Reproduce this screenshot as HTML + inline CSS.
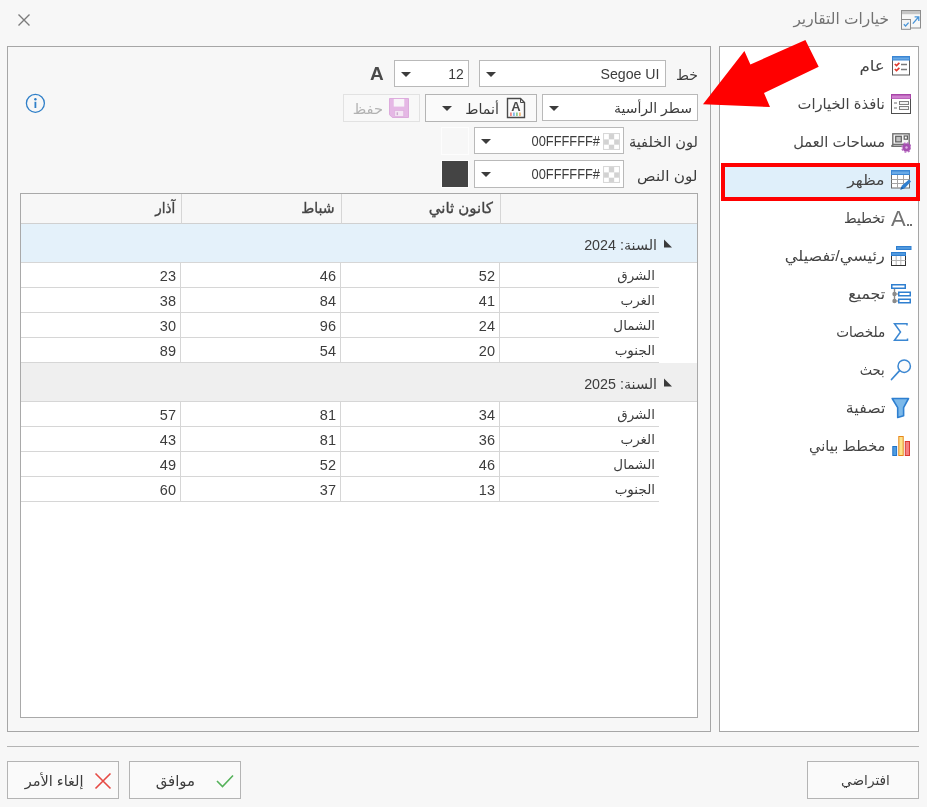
<!DOCTYPE html>
<html lang="ar">
<head>
<meta charset="utf-8">
<title>خيارات التقارير</title>
<style>
*{box-sizing:border-box;margin:0;padding:0}
html,body{width:927px;height:807px;overflow:hidden;background:#f7f7f7}
body{position:relative;will-change:transform;font-family:"Liberation Sans","DejaVu Sans",sans-serif;font-size:13px;color:#3c3c3c}
.abs{position:absolute}
.t{position:absolute;white-space:nowrap;direction:rtl;text-align:right;line-height:20px}
.panel{position:absolute;border:1px solid #a6a6a6;background:#f7f7f7}
.nav{position:absolute;right:42px;white-space:nowrap;direction:rtl;transform-origin:right center;font-size:15px;line-height:20px;color:#444}
.ico{position:absolute}
.combo{position:absolute;height:27px;border:1px solid #b9b9b9;background:#fff}
.combo .v{position:absolute;top:3px;white-space:nowrap;line-height:20px;font-size:15px;color:#3c3c3c;transform-origin:right center}
.arr{position:absolute;width:0;height:0;margin-left:-0.500px;border-left:5px solid transparent;border-right:5px solid transparent;border-top:5.400px solid #3c3c3c}
.btn{position:absolute;border:1px solid #b4b4b4;background:#fafafa}
.grid{position:absolute;left:20px;top:193px;width:678px;height:525px;border:1px solid #a9a9a9;background:#fff}
.row{position:absolute;left:0;width:676px}
.cell{position:absolute;top:0;height:100%;border-left:1px solid #d6d6d6;border-bottom:1px solid #d6d6d6}
.cell span{position:absolute;right:5px;top:3px;line-height:20px;white-space:nowrap;font-size:13.5px;color:#3c3c3c}
.cell span.n{font-size:14.500px;right:4px}
.hdr .cell{border-color:#d0d0d0;background:#f7f7f7}
.hdr .cell span{top:4px;right:6px;font-size:15px;-webkit-text-stroke:0.35px #444;color:#444;transform-origin:right center}
</style>
</head>
<body>

<!-- title bar -->
<div class="t" style="right:38px;top:9px;font-size:15.400px;color:#727272">خيارات التقارير</div>
<svg class="ico" style="left:901px;top:10px" width="20" height="20" viewBox="0 0 20 20">
  <rect x="0.500" y="0.500" width="19" height="17.500" fill="#f7f7f7" stroke="#8c8c8c"/>
  <rect x="1" y="1" width="18" height="3.200" fill="#c6c6c6"/>
  <path d="M11.800 13.600 L17.600 7 M13.600 6.800 H17.800 V11" stroke="#4a95d8" stroke-width="1.300" fill="none"/>
  <rect x="0.500" y="9.500" width="9" height="9.800" fill="#f4f4f4" stroke="#8c8c8c"/>
  <path d="M2.800 14.300 L4.600 16 L7.600 12.600" stroke="#4a95d8" stroke-width="1.300" fill="none"/>
</svg>
<svg class="ico" style="left:17px;top:13px" width="14" height="14" viewBox="0 0 14 14"><path d="M1.500 1.500 L12.500 12.500 M12.500 1.500 L1.500 12.500" stroke="#7b7b7b" stroke-width="1.400" fill="none"/></svg>

<!-- panels -->
<div class="panel" style="left:7px;top:46px;width:704px;height:686px"></div>
<div class="panel" style="left:719px;top:46px;width:200px;height:686px;background:#fff"></div>
<div class="abs" style="left:7px;top:746px;width:912px;height:1px;background:#b4b4b4"></div>


<!-- red arrow -->
<svg class="ico" style="left:690px;top:30px;z-index:5" width="140" height="90" viewBox="690 30 140 90"><polygon points="703,104.300 744.400,51 750.400,64.500 805.400,40 818.700,66.800 764,93 770,107" fill="#ff0000"/></svg>

<!-- nav selection -->
<div class="abs" style="left:721px;top:163px;width:199px;height:38px;border:4px solid #ff0000;background:#dfeffa;z-index:4"></div>

<!-- nav labels -->
<div class="nav" style="top:56px;z-index:6;transform:scaleX(1.115)">عام</div>
<div class="nav" style="top:94px;z-index:6;transform:scaleX(0.983)">نافذة الخيارات</div>
<div class="nav" style="top:132px;z-index:6;transform:scaleX(0.976)">مساحات العمل</div>
<div class="nav" style="top:170px;z-index:6;transform:scaleX(1.052)">مظهر</div>
<div class="nav" style="top:208px;z-index:6;transform:scaleX(0.913)">تخطيط</div>
<div class="nav" style="top:246px;z-index:6;transform:scaleX(1.077)">رئيسي/تفصيلي</div>
<div class="nav" style="top:284px;z-index:6;transform:scaleX(1.049)">تجميع</div>
<div class="nav" style="top:322px;z-index:6;transform:scaleX(0.905)">ملخصات</div>
<div class="nav" style="top:360px;z-index:6;transform:scaleX(0.873)">بحث</div>
<div class="nav" style="top:398px;z-index:6;transform:scaleX(1.057)">تصفية</div>
<div class="nav" style="top:436px;z-index:6;transform:scaleX(0.973)">مخطط بياني</div>

<!-- nav icons -->
<svg class="ico" style="left:891px;top:56px;z-index:6" width="20" height="20" viewBox="0 0 20 20"><rect x="1.500" y="0.500" width="17" height="18.500" fill="#fff" stroke="#5a5a5a"/><rect x="1" y="0" width="18" height="4.500" fill="#3a86d4"/><rect x="2" y="1.500" width="16" height="2" fill="#6aaae6"/><path d="M3.800 8 L5.500 9.600 L8.400 6.800 M3.800 13 L5.500 14.600 L8.400 11.800" fill="none" stroke="#e03a2e" stroke-width="1.700"/><path d="M10 8.500 H16 M10 13.500 H16" stroke="#7a7a7a" stroke-width="1.300"/></svg>
<svg class="ico" style="left:891px;top:94px;z-index:6" width="20" height="20" viewBox="0 0 20 20"><rect x="0.500" y="0.500" width="19" height="19" fill="#fff" stroke="#4f4f4f"/><rect x="0" y="0" width="20" height="5" fill="#a846a8"/><rect x="1" y="1.500" width="18" height="3" fill="#cf82cf"/><path d="M3 9 H6 M3 14 H6" stroke="#707070" stroke-width="1.200"/><rect x="8.500" y="7.500" width="9" height="3" fill="#f2f2f2" stroke="#808080"/><rect x="8.500" y="12.500" width="9" height="3" fill="#f2f2f2" stroke="#808080"/></svg>
<svg class="ico" style="left:891px;top:132px;z-index:6" width="20" height="21" viewBox="0 0 20 21"><rect x="1.800" y="1.800" width="16.400" height="10.600" fill="#f4f4f4" stroke="#707070" stroke-width="1.400"/><rect x="4.700" y="4.300" width="5.600" height="5.600" fill="#c2c2c2" stroke="#5e5e5e" stroke-width="1.200"/><rect x="13.200" y="4" width="3.200" height="3.200" fill="#fff" stroke="#5e5e5e" stroke-width="1.200"/><path d="M0.600 14.200 L2.200 12.200 M0.300 14.300 H11.500" stroke="#707070" stroke-width="1.600" fill="none"/><circle cx="15.500" cy="15.500" r="4" fill="#a54fb0"/><circle cx="15.500" cy="15.500" r="4.600" fill="none" stroke="#b86cc2" stroke-width="1.400" stroke-dasharray="2 1.600"/><circle cx="15.500" cy="15.500" r="1.200" fill="#dcb3e2"/></svg>
<svg class="ico" style="left:891px;top:170px;z-index:6" width="21" height="21" viewBox="0 0 21 21"><rect x="0.500" y="0.500" width="18" height="17.500" fill="#fff" stroke="#6a6a6a"/><rect x="0" y="0" width="19" height="5" fill="#3a86d4"/><rect x="1" y="1.500" width="17" height="2.500" fill="#6aaae6"/><path d="M0.500 9.500 H18.500 M0.500 13.500 H18.500 M6.500 5 V18 M12.500 5 V18" stroke="#a5a5a5" fill="none"/><path d="M9.500 19.500 L11 15.500 L18 9.500 L20 11.500 L13.500 18.500 Z" fill="#2f7fd0"/><path d="M9.300 19.800 L10.600 16.500 L12.600 18.600 Z" fill="#1b5fa8"/></svg>
<div class="abs" style="left:891px;top:204px;width:24px;height:30px;font-size:22px;line-height:30px;color:#727272;z-index:6;font-weight:normal">A</div>
<div class="abs" style="left:907px;top:224px;width:2px;height:2px;background:#6e6e6e;z-index:6"></div>
<div class="abs" style="left:910px;top:224px;width:2px;height:2px;background:#6e6e6e;z-index:6"></div>
<svg class="ico" style="left:891px;top:246px;z-index:6" width="21" height="20" viewBox="0 0 21 20"><rect x="5" y="0" width="15.500" height="4" fill="#2f7fd0"/><rect x="6" y="1.200" width="13.500" height="1.600" fill="#5aa0e2"/><rect x="0.500" y="6.500" width="14" height="13" fill="#fff" stroke="#333"/><rect x="0" y="6" width="15" height="4" fill="#2f7fd0"/><rect x="1" y="7.200" width="13" height="1.600" fill="#5aa0e2"/><path d="M0.500 14.500 H14.500 M5.200 10 V19 M9.800 10 V19" stroke="#b5b5b5" fill="none"/></svg>
<svg class="ico" style="left:891px;top:284px;z-index:6" width="21" height="21" viewBox="0 0 21 21"><path d="M3.500 4 V17" stroke="#8a8a8a" stroke-width="1.400"/><circle cx="3.500" cy="10" r="2.200" fill="#8a8a8a"/><circle cx="3.500" cy="17" r="2.200" fill="#8a8a8a"/><path d="M3.500 10 H8 M3.500 17 H8" stroke="#8a8a8a" stroke-width="1.200"/><rect x="0.750" y="0.750" width="13.500" height="3.500" fill="#fff" stroke="#2f7fd0" stroke-width="1.500"/><rect x="7.750" y="8.250" width="11.500" height="3.500" fill="#fff" stroke="#2f7fd0" stroke-width="1.500"/><rect x="7.750" y="15.250" width="11.500" height="3.500" fill="#fff" stroke="#2f7fd0" stroke-width="1.500"/></svg>
<svg class="ico" style="left:892px;top:322px;z-index:6" width="18" height="20" viewBox="0 0 18 20"><path d="M15 3.500 V1.800 H2.500 L8.500 10 L2.500 18.200 H15.500 V16.500" fill="none" stroke="#3b87d2" stroke-width="1.500" stroke-linejoin="miter"/></svg>
<svg class="ico" style="left:890px;top:358px;z-index:6" width="22" height="24" viewBox="0 0 22 24"><circle cx="14.200" cy="8.200" r="6.200" fill="#fbfbfb" stroke="#3b87d2" stroke-width="1.500"/><path d="M9.600 12.600 L1.500 21.500" stroke="#3b87d2" stroke-width="1.700" stroke-linecap="round"/></svg>
<svg class="ico" style="left:891px;top:397px;z-index:6" width="19" height="22" viewBox="0 0 19 22"><path d="M1.200 1.500 H17.500 L12.600 10.600 V18.800 L6.700 20.500 V10.600 Z" fill="#7cb9ea" stroke="#2e7fd0" stroke-width="1.600" stroke-linejoin="round"/></svg>
<svg class="ico" style="left:891px;top:435px;z-index:6" width="20" height="22" viewBox="0 0 20 22"><rect x="1.800" y="11.500" width="3.800" height="9" fill="#4f9be0" stroke="#2073c8"/><rect x="7.800" y="1.500" width="4.400" height="19" fill="#fbe38c" stroke="#e8861a"/><rect x="14.300" y="6.500" width="4.200" height="14" fill="#f57f7f" stroke="#d93a32"/></svg>


<!-- form controls -->
<div class="t" style="right:229px;top:65px;font-size:14px">خط</div>
<div class="combo" style="left:479px;top:60px;width:187px"><span class="v" style="right:5px;transform:scaleX(0.945)">Segoe UI</span><i class="arr" style="left:6px;top:11px"></i></div>
<div class="combo" style="left:394px;top:60px;width:75px"><span class="v" style="right:4px;transform:scaleX(0.93)">12</span><i class="arr" style="left:6px;top:11px"></i></div>
<div class="abs" style="left:370px;top:62px;font-size:19px;font-weight:bold;line-height:24px;color:#4a4a4a">A</div>

<div class="combo" style="left:542px;top:94px;width:156px"><span class="v" style="right:5px;direction:rtl;font-size:14px">سطر الرأسية</span><i class="arr" style="left:6px;top:11px"></i></div>
<div class="btn" style="left:425px;top:94px;width:112px;height:28px"><span class="t" style="right:37px;top:4px;font-size:14.300px">أنماط</span><i class="arr" style="left:16px;top:11px"></i></div>
<div class="btn" style="left:343px;top:94px;width:77px;height:28px;border-color:#e2e2e2;background:#f8f8f8"><span class="t" style="right:36px;top:4px;font-size:14.600px;color:#b2b2b2">حفظ</span></div>

<svg class="ico" style="left:506px;top:97px;z-index:3" width="20" height="22" viewBox="0 0 20 22"><path d="M1.500 1.500 H14.500 L18.500 5.500 V20.500 H1.500 Z" fill="#fafafa" stroke="#4a4a4a" stroke-width="1.400"/><path d="M14.500 1.500 V5.500 H18.500" fill="none" stroke="#4a4a4a"/><text x="10" y="14" font-size="13" font-weight="bold" text-anchor="middle" fill="#4a4a4a" font-family="Liberation Sans, sans-serif">A</text><rect x="4" y="15.500" width="1.800" height="3.500" fill="#ee8883"/><rect x="7" y="15.500" width="1.800" height="3.500" fill="#85b8ea"/><rect x="10" y="15.500" width="1.800" height="3.500" fill="#90cf94"/><rect x="13" y="15.500" width="1.800" height="3.500" fill="#f4b878"/></svg>
<svg class="ico" style="left:389px;top:98px;z-index:3" width="20" height="20" viewBox="0 0 21 21"><path d="M0.500 0.500 H20.500 V20.500 H3.500 L0.500 17.500 Z" fill="#e5b8e5" stroke="#dba8db"/><rect x="5" y="1" width="11" height="8" fill="#f8f4f8"/><rect x="6" y="13" width="9.500" height="6.500" fill="#f4e6f4" stroke="#ddb0dd" stroke-width="0.800"/><rect x="8" y="15" width="1.500" height="3" fill="#ccaacc"/></svg>


<div class="t" style="right:229px;top:132px;font-size:14.600px">لون الخلفية</div>
<div class="combo" style="left:474px;top:127px;width:150px"><span class="v" style="right:23px;direction:ltr;transform:scaleX(0.855)">00FFFFFF#</span><i class="arr" style="left:6px;top:11px"></i><svg class="ico" style="right:3px;top:5px" width="17" height="17" viewBox="0 0 16 16"><rect x="0.500" y="0.500" width="15" height="15" fill="#fff" stroke="#d8d8d8"/><rect x="5.500" y="1" width="5" height="5" fill="#d2d2d2"/><rect x="1" y="6" width="4.500" height="5" fill="#d2d2d2"/><rect x="10.500" y="6" width="4.500" height="5" fill="#d2d2d2"/><rect x="5.500" y="11" width="5" height="4" fill="#d2d2d2"/></svg></div>
<div class="abs" style="left:441px;top:127px;width:28px;height:28px;border:1px solid #fdfdfd;background:#f7f7f7"></div>

<div class="t" style="right:229px;top:165.500px;font-size:14.600px;transform:scaleX(1.05);transform-origin:right center">لون النص</div>
<div class="combo" style="left:474px;top:160px;width:150px;height:28px"><span class="v" style="right:23px;direction:ltr;transform:scaleX(0.855)">00FFFFFF#</span><i class="arr" style="left:6px;top:11px"></i><svg class="ico" style="right:3px;top:5px" width="17" height="17" viewBox="0 0 16 16"><rect x="0.500" y="0.500" width="15" height="15" fill="#fff" stroke="#d8d8d8"/><rect x="5.500" y="1" width="5" height="5" fill="#d2d2d2"/><rect x="1" y="6" width="4.500" height="5" fill="#d2d2d2"/><rect x="10.500" y="6" width="4.500" height="5" fill="#d2d2d2"/><rect x="5.500" y="11" width="5" height="4" fill="#d2d2d2"/></svg></div>
<div class="abs" style="left:441px;top:160px;width:28px;height:28px;border:1px solid #fdfdfd;background:#444"></div>

<!-- info icon -->
<svg class="ico" style="left:25px;top:93px" width="21" height="21" viewBox="0 0 21 21"><circle cx="10.400" cy="10.300" r="9" fill="none" stroke="#2f7fc8" stroke-width="1.300"/><rect x="9.500" y="8.800" width="1.800" height="6.200" fill="#2f7fc8"/><circle cx="10.400" cy="6.200" r="1.200" fill="#2f7fc8"/></svg>

<div class="grid">
<div class="row hdr" style="top:0;height:30px"><div class="cell" style="left:0;width:161px;border-left:none;border-right:1px solid #d6d6d6"><span style="transform:scaleX(0.900)">آذار</span></div><div class="cell" style="left:161px;width:160px;border-left:none;border-right:1px solid #d6d6d6"><span style="transform:scaleX(0.94)">شباط</span></div><div class="cell" style="left:321px;width:159px;border-left:none;border-right:1px solid #d6d6d6"><span style="right:7px">كانون ثاني</span></div><div class="cell" style="left:480px;width:196px;border-left:none"></div></div>
<div class="row" style="top:30px;height:39px;background:#e4f1fa;border-bottom:1px solid #d6d6d6"><span class="t" style="right:40px;top:11px;font-size:14.300px">السنة: 2024</span><svg class="ico" style="left:643px;top:15px" width="9" height="9" viewBox="0 0 9 9"><polygon points="0,0.500 0,8.500 8,8.500" fill="#3a3a3a"/></svg></div>
<div class="row" style="top:69px;height:25px"><div class="cell" style="left:0;width:160px;border-left:none;border-right:1px solid #d6d6d6"><span class="n">23</span></div><div class="cell" style="left:160px;width:160px;border-left:none;border-right:1px solid #d6d6d6"><span class="n">46</span></div><div class="cell" style="left:320px;width:159px;border-left:none;border-right:1px solid #d6d6d6"><span class="n">52</span></div><div class="cell" style="left:479px;width:159px;border-left:none"><span style="direction:rtl;right:4px">الشرق</span></div></div>
<div class="row" style="top:94px;height:25px"><div class="cell" style="left:0;width:160px;border-left:none;border-right:1px solid #d6d6d6"><span class="n">38</span></div><div class="cell" style="left:160px;width:160px;border-left:none;border-right:1px solid #d6d6d6"><span class="n">84</span></div><div class="cell" style="left:320px;width:159px;border-left:none;border-right:1px solid #d6d6d6"><span class="n">41</span></div><div class="cell" style="left:479px;width:159px;border-left:none"><span style="direction:rtl;right:4px">الغرب</span></div></div>
<div class="row" style="top:119px;height:25px"><div class="cell" style="left:0;width:160px;border-left:none;border-right:1px solid #d6d6d6"><span class="n">30</span></div><div class="cell" style="left:160px;width:160px;border-left:none;border-right:1px solid #d6d6d6"><span class="n">96</span></div><div class="cell" style="left:320px;width:159px;border-left:none;border-right:1px solid #d6d6d6"><span class="n">24</span></div><div class="cell" style="left:479px;width:159px;border-left:none"><span style="direction:rtl;right:4px">الشمال</span></div></div>
<div class="row" style="top:144px;height:25px"><div class="cell" style="left:0;width:160px;border-left:none;border-right:1px solid #d6d6d6"><span class="n">89</span></div><div class="cell" style="left:160px;width:160px;border-left:none;border-right:1px solid #d6d6d6"><span class="n">54</span></div><div class="cell" style="left:320px;width:159px;border-left:none;border-right:1px solid #d6d6d6"><span class="n">20</span></div><div class="cell" style="left:479px;width:159px;border-left:none"><span style="direction:rtl;right:4px">الجنوب</span></div></div>
<div class="row" style="top:169px;height:39px;background:#efefef;border-bottom:1px solid #d6d6d6"><span class="t" style="right:40px;top:11px;font-size:14.300px">السنة: 2025</span><svg class="ico" style="left:643px;top:15px" width="9" height="9" viewBox="0 0 9 9"><polygon points="0,0.500 0,8.500 8,8.500" fill="#3a3a3a"/></svg></div>
<div class="row" style="top:208px;height:25px"><div class="cell" style="left:0;width:160px;border-left:none;border-right:1px solid #d6d6d6"><span class="n">57</span></div><div class="cell" style="left:160px;width:160px;border-left:none;border-right:1px solid #d6d6d6"><span class="n">81</span></div><div class="cell" style="left:320px;width:159px;border-left:none;border-right:1px solid #d6d6d6"><span class="n">34</span></div><div class="cell" style="left:479px;width:159px;border-left:none"><span style="direction:rtl;right:4px">الشرق</span></div></div>
<div class="row" style="top:233px;height:25px"><div class="cell" style="left:0;width:160px;border-left:none;border-right:1px solid #d6d6d6"><span class="n">43</span></div><div class="cell" style="left:160px;width:160px;border-left:none;border-right:1px solid #d6d6d6"><span class="n">81</span></div><div class="cell" style="left:320px;width:159px;border-left:none;border-right:1px solid #d6d6d6"><span class="n">36</span></div><div class="cell" style="left:479px;width:159px;border-left:none"><span style="direction:rtl;right:4px">الغرب</span></div></div>
<div class="row" style="top:258px;height:25px"><div class="cell" style="left:0;width:160px;border-left:none;border-right:1px solid #d6d6d6"><span class="n">49</span></div><div class="cell" style="left:160px;width:160px;border-left:none;border-right:1px solid #d6d6d6"><span class="n">52</span></div><div class="cell" style="left:320px;width:159px;border-left:none;border-right:1px solid #d6d6d6"><span class="n">46</span></div><div class="cell" style="left:479px;width:159px;border-left:none"><span style="direction:rtl;right:4px">الشمال</span></div></div>
<div class="row" style="top:283px;height:25px"><div class="cell" style="left:0;width:160px;border-left:none;border-right:1px solid #d6d6d6"><span class="n">60</span></div><div class="cell" style="left:160px;width:160px;border-left:none;border-right:1px solid #d6d6d6"><span class="n">37</span></div><div class="cell" style="left:320px;width:159px;border-left:none;border-right:1px solid #d6d6d6"><span class="n">13</span></div><div class="cell" style="left:479px;width:159px;border-left:none"><span style="direction:rtl;right:4px">الجنوب</span></div></div>
</div>


<!-- bottom buttons -->
<div class="btn" style="left:807px;top:761px;width:112px;height:38px"><span class="t" style="left:5px;right:0;top:9px;text-align:center;font-size:13.700px">افتراضي</span></div>
<div class="btn" style="left:129px;top:761px;width:112px;height:38px"><span class="t" style="right:45px;top:9px;font-size:14.900px">موافق</span><svg class="ico" style="left:85px;top:11px" width="20" height="16" viewBox="0 0 20 16"><path d="M2 8 L7.500 13.500 L18 2.500" fill="none" stroke="#55b25a" stroke-width="1.600"/></svg></div>
<div class="btn" style="left:7px;top:761px;width:112px;height:38px"><span class="t" style="right:34.500px;top:9px;font-size:14.500px">إلغاء الأمر</span><svg class="ico" style="left:86px;top:10px" width="18" height="18" viewBox="0 0 18 18"><path d="M1.500 1.500 L16.500 16.500 M16.500 1.500 L1.500 16.500" fill="none" stroke="#e64a44" stroke-width="1.600"/></svg></div>

</body>
</html>
